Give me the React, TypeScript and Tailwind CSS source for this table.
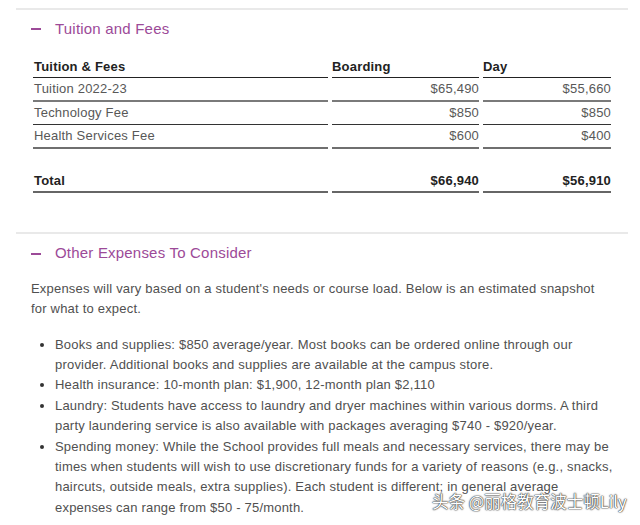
import React from "react";

const font = { fontFamily: '"Liberation Sans", Arial, sans-serif' };

function Heading({ children }: { children: React.ReactNode }) {
  return (
    <div className="flex items-center h-[20px] text-[15px] text-[#9c4a98] tracking-[0.2px]">
      <span className="inline-block w-[10px] h-[2px] bg-[#9c4a98] ml-[15px] mr-[14px]" />
      <span>{children}</span>
    </div>
  );
}

type Row = { label: string; b: string; d: string; border: string };

export default function App() {
  const rows: Row[] = [
    { label: "Tuition 2022-23", b: "$65,490", d: "$55,660", border: "border-b-2 border-[#7a7a7a]" },
    { label: "Technology Fee", b: "$850", d: "$850", border: "border-b border-[#333]" },
    { label: "Health Services Fee", b: "$600", d: "$400", border: "border-b-2 border-[#6f6f6f]" },
  ];
  return (
    <div className="relative w-[640px] h-[525px] overflow-hidden bg-white tracking-[0.2px]" style={font}>
      <div className="ml-[16px] w-[612px] pt-[8px]">
        <div className="border-t-2 border-[#e9e9e9]" />
        {/* Section 1 */}
        <div className="pt-[9px]">
          <Heading>Tuition and Fees</Heading>
          <div className="ml-[17px] mt-[19px] grid grid-cols-[295px_147px_128px] gap-x-[4px] text-[13px]">
            <div className="h-[20px] border-b border-[#222] font-bold text-[#222] pl-[1px] leading-[18px]">Tuition &amp; Fees</div>
            <div className="h-[20px] border-b border-[#222] font-bold text-[#222] leading-[18px]">Boarding</div>
            <div className="h-[20px] border-b border-[#222] font-bold text-[#222] leading-[18px]">Day</div>
            {rows.map((r) => (
              <React.Fragment key={r.label}>
                <div className={`h-[23.5px] leading-[22px] pl-[1px] text-[#585858] ${r.border}`}>{r.label}</div>
                <div className={`h-[23.5px] leading-[22px] text-right text-[#585858] ${r.border}`}>{r.b}</div>
                <div className={`h-[23.5px] leading-[22px] text-right text-[#585858] ${r.border}`}>{r.d}</div>
              </React.Fragment>
            ))}
            <div className="h-[21px] col-span-3" />
            <div className="h-[23px] leading-[21px] pl-[1px] font-bold text-[#222] border-b-2 border-[#666]">Total</div>
            <div className="h-[23px] leading-[21px] text-right font-bold text-[#222] border-b-2 border-[#666]">$66,940</div>
            <div className="h-[23px] leading-[21px] text-right font-bold text-[#222] border-b-2 border-[#666]">$56,910</div>
          </div>
        </div>
        <div className="mt-[39px] border-t-2 border-[#e9e9e9]" />
        {/* Section 2 */}
        <div className="pt-[10px]">
          <Heading>Other Expenses To Consider</Heading>
          <div className="ml-[15px] mt-[15px] text-[13px] text-[#505050] leading-[20px]">
            <p>
              Expenses will vary based on a student's needs or course load. Below is an estimated snapshot
              <br />
              for what to expect.
            </p>
            <ul className="mt-[16px] pl-[24px] list-disc leading-[20.4px] marker:text-[#333]">
              <li>
                Books and supplies: $850 average/year. Most books can be ordered online through our
                <br />
                provider. Additional books and supplies are available at the campus store.
              </li>
              <li>Health insurance: 10-month plan: $1,900, 12-month plan $2,110</li>
              <li>
                Laundry: Students have access to laundry and dryer machines within various dorms. A third
                <br />
                party laundering service is also available with packages averaging $740 - $920/year.
              </li>
              <li>
                Spending money: While the School provides full meals and necessary services, there may be
                <br />
                times when students will wish to use discretionary funds for a variety of reasons (e.g., snacks,
                <br />
                haircuts, outside meals, extra supplies). Each student is different; in general average
                <br />
                expenses can range from $50 - 75/month.
              </li>
            </ul>
          </div>
        </div>
      </div>
      <div
        className="absolute left-[432px] top-[489px] text-[16.5px] tracking-normal text-white whitespace-nowrap [text-shadow:0_0_1px_#333,0_0_1px_#333,0_0_2px_#555]"
        style={{ fontFamily: '"Noto Sans CJK SC", "Liberation Sans", sans-serif' }}
      >
        头条 @丽格教育波士顿Lily
      </div>
    </div>
  );
}
